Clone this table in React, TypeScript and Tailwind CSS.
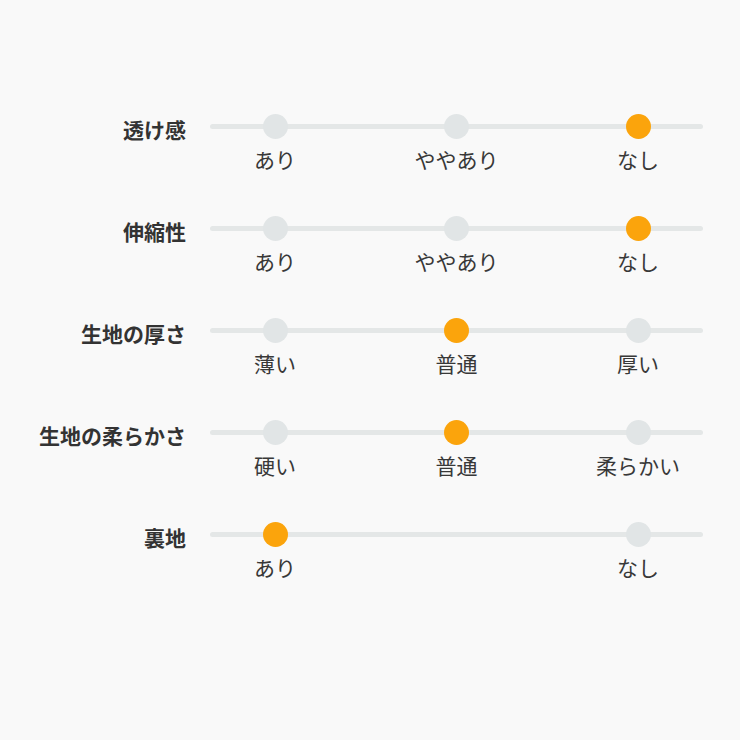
import React from "react";

// null = no option at that position
const rows: { label: string; options: (string | null)[]; selected: number }[] = [
  { label: "透け感", options: ["あり", "ややあり", "なし"], selected: 2 },
  { label: "伸縮性", options: ["あり", "ややあり", "なし"], selected: 2 },
  { label: "生地の厚さ", options: ["薄い", "普通", "厚い"], selected: 1 },
  { label: "生地の柔らかさ", options: ["硬い", "普通", "柔らかい"], selected: 1 },
  { label: "裏地", options: ["あり", null, "なし"], selected: 0 },
];

function ScaleRow({ label, options, selected }: { label: string; options: (string | null)[]; selected: number }) {
  return (
    <div className="flex items-start gap-[24px]">
      <div className="w-[160px] mt-[1px] text-right text-[21px] leading-[28px] font-bold text-[#333333]">
        {label}
      </div>
      <div className="w-[493px]">
        <div className="relative h-[25px]">
          <div className="absolute left-0 right-0 top-[10px] h-[5px] rounded-full bg-[#e4e7e7]" />
          <div className="relative flex h-full justify-between px-[15px]">
            {options.map((opt, i) => (
              <div key={i} className="flex w-[100px] justify-center">
                {opt !== null && (
                  <span
                    className={
                      i === selected
                        ? "block h-[25px] w-[25px] rounded-full bg-[#fba40c]"
                        : "block h-[25px] w-[25px] rounded-full bg-[#e1e5e6]"
                    }
                  />
                )}
              </div>
            ))}
          </div>
        </div>
        <div className="mt-[6px] flex justify-between px-[15px]">
          {options.map((opt, i) => (
            <div key={i} className="w-[100px] text-center text-[21px] leading-[28px] text-[#383838]">
              {opt}
            </div>
          ))}
        </div>
      </div>
    </div>
  );
}

export default function App() {
  return (
    <div
      className="min-h-[740px] w-[740px] bg-[#f9f9f9] pl-[26px] pt-[114px]"
      style={{ fontFamily: '"Noto Sans CJK JP", "Noto Sans", sans-serif' }}
    >
      <div className="flex flex-col gap-[43px]">
        {rows.map((r) => (
          <ScaleRow key={r.label} label={r.label} options={r.options} selected={r.selected} />
        ))}
      </div>
    </div>
  );
}
